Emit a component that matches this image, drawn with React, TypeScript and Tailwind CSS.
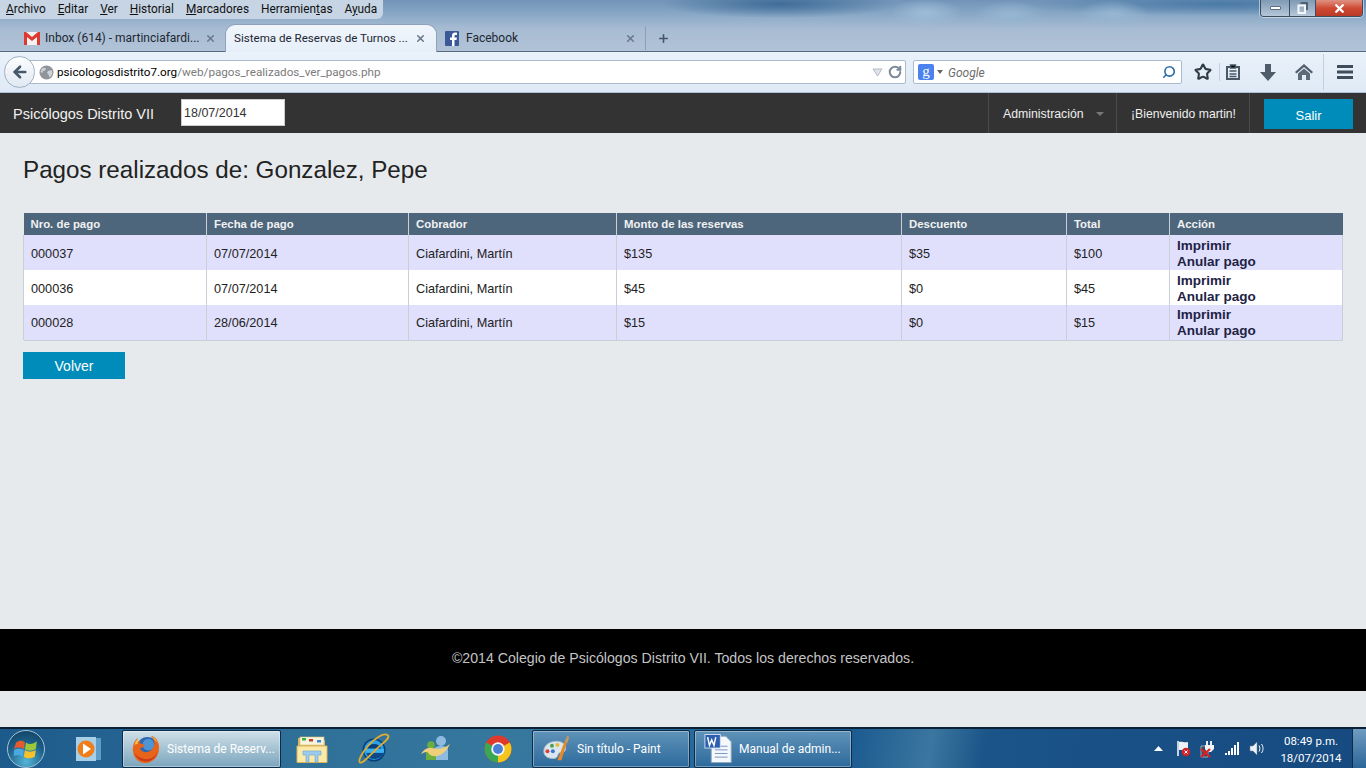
import React from "react";
import { Star, ArrowLeft, X, Plus, RotateCw, Search } from "lucide-react";

const ui = "font-['Roboto','Noto_Sans',sans-serif]";

function Gmail() {
  return (
    <svg width="16" height="13" viewBox="0 0 16 13">
      <rect width="16" height="13" fill="#f6f2f0" />
      <path d="M0 0h2l6 5 6-5h2v13h-3V5L8 9 3 5v8H0z" fill="#dc3a30" />
    </svg>
  );
}

function FbIcon() {
  return (
    <svg width="14" height="15" viewBox="0 0 14 15">
      <rect width="14" height="15" rx="1" fill="#3b5998" />
      <path d="M9.500 15V9h2l.4-2.400H9.500V5.200c0-.8.300-1.200 1.200-1.200H12V1.800C11.600 1.700 10.900 1.600 10.200 1.600 8.300 1.600 7 2.700 7 4.900v1.700H5V9h2v6z" fill="#fff" />
    </svg>
  );
}

function GlobeIcon() {
  return (
    <svg width="15" height="15" viewBox="0 0 15 15">
      <circle cx="7.500" cy="7.500" r="7" fill="#8f959b" />
      <path d="M3 3.500c2-1 3-1 4 0l-1 2-2 .5-.5 2L1.500 7zM9 6l3.500-1 1 2.500-1 3-2 2-1-3-1.500-1.500z" fill="#cfd3d7" />
    </svg>
  );
}

function Firefox() {
  return (
    <svg width="29" height="31" viewBox="0 0 30 32">
      <circle cx="16" cy="15" r="11" fill="#2f68ad" />
      <circle cx="17" cy="12" r="6" fill="#4f95d6" />
      <path d="M20 3c5 1 8 6 8 12 0 9-6 16-14 16C7 31 2 26 1 19 .5 14 2 8 6 5c-1 2-1 4-.5 5 1-1 2-2 3.500-2.500-.8 1-1.300 2-1.300 3 2 .5 4 1 5.500 2-.5 2-3 3-5 3 1 3 4 5 8 4 4-1 7-5 7-9 0-3-1.500-6-3.700-7.500z" fill="#e8641b" />
      <path d="M2.500 21c2 5 6.500 8.500 12 8.500 6 0 11-5 12.500-11-2 5-6.500 8.500-12 8.500-5 0-9.500-2-12.500-6z" fill="#c9391c" />
      <path d="M21 4c3 1.500 5 4 5.800 7-1-1.800-2.500-3.400-4.300-4.500z" fill="#f8c63a" />
      <path d="M3 12c0-2 1-4 3-6-.5 2-.3 3.500 0 5z" fill="#f8c63a" />
    </svg>
  );
}

function Explorer() {
  return (
    <svg width="32" height="30" viewBox="0 0 32 30">
      <path d="M2 4h10l2 2h15v22H2z" fill="#d9b65c" />
      <rect x="4" y="3" width="24" height="8" fill="#f9f5dc" stroke="#d2bf7c" strokeWidth=".6" />
      <rect x="6" y="4" width="4" height="2.500" fill="#3fae49" />
      <rect x="13" y="5" width="4" height="2.500" fill="#c83c30" />
      <rect x="21" y="6" width="4" height="2.500" fill="#3b82d6" />
      <path d="M1 12h30v16.500H1z" fill="#fbe9a8" stroke="#d9b65c" />
      <path d="M7 17h18v4h-3v7h-3v-7h-6v7h-3v-7H7z" fill="#9ccbec" stroke="#6ba6d3" strokeWidth=".6" />
    </svg>
  );
}

function IE() {
  return (
    <svg width="32" height="32" viewBox="0 0 32 32">
      <circle cx="16" cy="17" r="11.500" fill="#0b3f7c" />
      <circle cx="16" cy="17" r="10" fill="#27a0ec" />
      <path d="M9 15.500c.8-3 3.600-4.500 7-4.500s6.200 1.500 7 4.500z" fill="#0b3f7c" />
      <path d="M8 20h17.500c-1.200 3.800-5 6-9.500 6-3.600 0-6.400-2-7.500-6z" fill="#0b3f7c" opacity=".9" />
      <rect x="8" y="16" width="18" height="3.500" fill="#3db2f2" />
      <path d="M30 2.500c2.500 3-5 7-13 15S4 31 2 29.500 3 21 10 13 26-1 30 2.500z" fill="none" stroke="#e0ad2e" strokeWidth="1.800" />
    </svg>
  );
}

function Messenger() {
  return (
    <svg width="32" height="28" viewBox="0 0 32 28">
      <circle cx="21" cy="6" r="5" fill="#8fbbe0" />
      <path d="M14 25V15c0-3 3-4 7-4s7 1 7 4v10z" fill="#8fbbe0" />
      <circle cx="11" cy="10" r="3.800" fill="#6cae3e" />
      <path d="M6 25v-7c0-3 2-4 5-4s5 1 5 4v7z" fill="#6cae3e" />
      <path d="M1 19c3-5 7-7 11-6 5 1 11 2 18-4-4 9-11 13-17 12-3 0-4-3-6-4-2-.500-4 1-6 2z" fill="#efcf7a" />
    </svg>
  );
}

function Chrome() {
  return (
    <svg width="28" height="28" viewBox="0 0 30 30">
      <circle cx="15" cy="15" r="14.500" fill="#e0392b" />
      <path d="M15 15 27.600 8A14.500 14.500 0 0 1 15 29.500z" fill="#f6c51b" />
      <path d="M15 15 15 29.500A14.500 14.500 0 0 1 2.400 8z" fill="#3aa852" />
      <circle cx="15" cy="15" r="7.200" fill="#f4f4f4" />
      <circle cx="15" cy="15" r="5.300" fill="#4a80d6" />
    </svg>
  );
}

function Paint() {
  return (
    <svg width="29" height="29" viewBox="0 0 32 30">
      <path d="M2 18C2 11 9 7 16 7s11 4 10 9c-1 4-5 3-7 4s-1 6-6 6C7 26 2 24 2 18z" fill="#dbe6ee" stroke="#a9bccb" />
      <circle cx="6" cy="18" r="2.200" fill="#d9403a" />
      <circle cx="11" cy="12" r="2.200" fill="#4da04f" />
      <circle cx="17" cy="11" r="2.200" fill="#e8b830" />
      <circle cx="12" cy="18" r="2.200" fill="#3a78c9" />
      <path d="M17 28 25 7l2.500 1-6 20z" fill="#e58a26" />
      <path d="M25 7l3-6 2 1-2 7z" fill="#c49a66" />
    </svg>
  );
}

function Word() {
  return (
    <svg width="29" height="31" viewBox="0 0 32 33">
      <path d="M8 3h16l6 6v23H8z" fill="#f4f7fb" stroke="#8ea6c2" />
      <path d="M12 14h14M12 18h14M12 22h14M12 26h14" stroke="#6f8fbd" />
      <rect x="1" y="1" width="17" height="15" fill="#2d5fb0" stroke="#d6e2f3" />
      <path d="M4 4l2 9 2.500-6 2.500 6 2-9" fill="none" stroke="#fff" strokeWidth="1.600" />
    </svg>
  );
}

function MediaPlayer() {
  return (
    <svg width="26" height="26" viewBox="0 0 26 26">
      <rect x="6" y="2" width="20" height="22" fill="#5f9cc6" />
      <rect x="1" y="1" width="20" height="24" fill="#a8cfe8" />
      <circle cx="11" cy="13" r="8.500" fill="#ee7d1a" />
      <path d="M8 7.500l8 5.500-8 5.500z" fill="#fff" />
    </svg>
  );
}

function StartOrb() {
  return (
    <div className="flex h-[38px] w-[38px] items-center justify-center rounded-full border border-[#a4c4d8] bg-[radial-gradient(circle_at_50%_85%,#54b6d8,#1c5f88_55%,#123a5a)]">
      <svg width="24" height="22" viewBox="0 0 22 20">
        <path d="M2 4c3-2 6-2 8 0l-1 6c-3-2-6-2-9 0z" fill="#e8592c" />
        <path d="M11 4c3 2 6 2 10-1l-1 7c-4 2-7 2-10 0z" fill="#9cc83a" />
        <path d="M0 11c3-2 6-2 9 0l-1 6c-3-2-6-2-9 0z" fill="#4ba8e0" />
        <path d="M10 11c3 2 6 2 10 0l-1 6c-4 2-7 2-10 0z" fill="#f5c22c" />
      </svg>
    </div>
  );
}

function Tray() {
  return (
    <div className="flex items-center">
      <svg width="9" height="5" viewBox="0 0 9 5" className="mr-[14px]">
        <path d="M0 5l4.500-5L9 5z" fill="#fff" />
      </svg>
      <svg width="14" height="17" viewBox="0 0 14 17" className="mr-[8px]">
        <path d="M1 1v15" stroke="#fff" strokeWidth="1.500" />
        <path d="M2 2c3-1 5 1 9 0v8H2z" fill="#eef2f6" />
        <circle cx="9" cy="12" r="4.300" fill="#d4232a" />
        <path d="M7.500 10.500l3 3M10.500 10.500l-3 3" stroke="#fff" />
      </svg>
      <svg width="16" height="18" viewBox="0 0 16 18" className="mr-[10px]">
        <path d="M2 6h7v11H2z" fill="#3a4a58" stroke="#c8d4de" strokeWidth=".7" />
        <path d="M8 1v4M12 1v4" stroke="#fff" strokeWidth="1.800" />
        <path d="M6 5h9v4l-3 3H8L6 9z" fill="#f2f5f8" />
        <path d="M2 9l9 8M11 9l-9 8" stroke="#dc1f26" strokeWidth="2.200" />
      </svg>
      <svg width="14" height="13" viewBox="0 0 14 13" className="mr-[10px]">
        <path d="M0 11h2v2H0zM3 9h2v4H3zM6 6h2v7H6zM9 3h2v10H9zM12 0h2v13h-2z" fill="#fff" />
      </svg>
      <svg width="16" height="15" viewBox="0 0 16 15">
        <path d="M1 5h3l4-4v13l-4-4H1z" fill="#eef2f6" stroke="#6e8397" strokeWidth=".5" />
        <path d="M10 4.500c1.200 2 1.200 4 0 6M12.500 3c2 3 2 6 0 9" stroke="#fff" fill="none" />
      </svg>
    </div>
  );
}

function Task({ width, active, icon, label }: { width: string; active?: boolean; icon: React.ReactNode; label: string }) {
  return (
    <div
      className={`flex h-[38px] items-center gap-[6px] rounded-[2px] border border-[#0d2c4a] pl-[9px] text-[12px] text-white shadow-[inset_0_0_0_1px_rgba(255,255,255,0.35)] ${width} ${
        active ? "bg-gradient-to-b from-[#cfe0e8] to-[#7ba5bd]" : "bg-gradient-to-b from-[#5f93b8] to-[#2c6a9c]"
      }`}
    >
      <div className="flex w-[29px] shrink-0 justify-center">{icon}</div>
      <span className="whitespace-nowrap">{label}</span>
    </div>
  );
}

function Pin({ children }: { children: React.ReactNode }) {
  return <div className="flex w-[62px] shrink-0 justify-center">{children}</div>;
}

const rows = [
  ["000037", "07/07/2014", "Ciafardini, Martín", "$135", "$35", "$100"],
  ["000036", "07/07/2014", "Ciafardini, Martín", "$45", "$0", "$45"],
  ["000028", "28/06/2014", "Ciafardini, Martín", "$15", "$0", "$15"],
];
const heads: [string, string][] = [
  ["Nro. de pago", "w-[183px]"],
  ["Fecha de pago", "w-[202px]"],
  ["Cobrador", "w-[208px]"],
  ["Monto de las reservas", "w-[285px]"],
  ["Descuento", "w-[165px]"],
  ["Total", "w-[103px]"],
  ["Acción", "w-[173px]"],
];

function MenuItem({ k, rest, pre }: { k: string; rest: string; pre?: string }) {
  return (
    <span>
      {pre}
      <span className="underline">{k}</span>
      {rest}
    </span>
  );
}

export default function App() {
  return (
    <div className="flex h-[768px] w-[1366px] flex-col overflow-hidden bg-[#e6eaed] font-['Liberation_Sans',Arial,sans-serif]">
      {/* Window title and tabs */}
      <div
        className={`relative h-[52px] shrink-0 border-b border-[#54687f] bg-[radial-gradient(ellipse_36px_14px_at_926px_13px,#9dbdd8,transparent),radial-gradient(ellipse_36px_14px_at_1010px_15px,#96b6d2,transparent),radial-gradient(ellipse_36px_14px_at_1113px_14px,#96b6d2,transparent),radial-gradient(ellipse_120px_14px_at_780px_4px,#3f6c98,transparent),radial-gradient(ellipse_200px_12px_at_1220px_4px,#4a7aa6,transparent),linear-gradient(180deg,#7294b8_0%,#86a6c5_25%,#a6bbd2_55%,#b2c3d7_100%)] ${ui}`}
      >
        <div className="flex h-[19px] w-[383px] items-center gap-[12px] rounded-br-[6px] bg-[#c6d4e4] pl-[6px] pt-px text-[11.85px] leading-none text-[#111]">
          <MenuItem k="A" rest="rchivo" />
          <MenuItem k="E" rest="ditar" />
          <MenuItem k="V" rest="er" />
          <MenuItem k="H" rest="istorial" />
          <MenuItem k="M" rest="arcadores" />
          <MenuItem pre="Herramien" k="t" rest="as" />
          <MenuItem pre="A" k="y" rest="uda" />
        </div>
        <div className="mt-[5px] flex h-[28px] items-center text-[12px] text-[#1d2733]">
          <div className="flex h-[28px] w-[225px] shrink-0 items-center pl-[24px] pr-[9px]">
            <Gmail />
            <span className="ml-[5px] flex-1 whitespace-nowrap">Inbox (614) - martinciafardi...</span>
            <X size={11} strokeWidth={3.500} className="text-[#6a7a8b]" />
          </div>
          <div className="flex h-[28px] w-[212px] shrink-0 items-center rounded-t-[10px] border border-b-0 border-[#8ea3ba] bg-gradient-to-b from-[#f0f5fb] to-[#e6eff9] pl-[8px] pr-[10px]">
            <span className="flex-1 whitespace-nowrap text-[11.6px]">Sistema de Reservas de Turnos ...</span>
            <X size={11} strokeWidth={3.500} className="text-[#6a7a8b]" />
          </div>
          <div className="flex h-[28px] w-[208px] shrink-0 items-center pl-[8px] pr-[9px]">
            <FbIcon />
            <span className="ml-[7px] flex-1">Facebook</span>
            <X size={11} strokeWidth={3.500} className="text-[#6a7a8b]" />
          </div>
          <div className="flex h-[24px] items-center border-l border-[#8b9fb5] pl-[11px]">
            <Plus size={13} strokeWidth={3} className="text-[#46566a]" />
          </div>
        </div>
        <div className="absolute right-[3px] top-0 flex h-[17px] w-[103px] overflow-hidden rounded-b-[4px] border border-t-0 border-[#3d4c5e] shadow-[0_0_0_1px_rgba(255,255,255,0.5)]">
          <div className="flex w-[28px] items-center justify-center bg-gradient-to-b from-[#7f9ab5] to-[#b6c7d8]">
            <div className="h-[4px] w-[11px] rounded-[1px] border border-[#5c6f82] bg-white" />
          </div>
          <div className="flex w-[27px] items-center justify-center border-x border-[#3d4c5e] bg-gradient-to-b from-[#7f9ab5] to-[#b6c7d8]">
            <svg width="11" height="12" viewBox="0 0 11 12">
              <path d="M3.500 1h6.500v7" fill="none" stroke="#3d4c5e" strokeWidth="1.500" />
              <rect x="1.500" y="3.500" width="6.500" height="7.500" fill="none" stroke="#f4f7fa" strokeWidth="2" />
            </svg>
          </div>
          <div className="flex flex-1 items-center justify-center bg-gradient-to-b from-[#dd9283] via-[#cf4a33] to-[#b83a26]">
            <X size={13} strokeWidth={4.500} className="text-white" />
          </div>
        </div>
      </div>

      {/* Navigation toolbar */}
      <div className={`flex h-[41px] shrink-0 items-center border-b border-[#a9c1d8] bg-gradient-to-b from-[#e9f1fa] to-[#dfeaf6] pl-[4px] ${ui}`}>
        <div className="z-10 flex h-[32px] w-[31px] items-center justify-center rounded-full border border-[#9fb1c4] bg-gradient-to-b from-[#fdfeff] to-[#e0e8f1]">
          <ArrowLeft size={18} strokeWidth={3.500} className="text-[#46586b]" />
        </div>
        <div className="-ml-[6px] flex h-[24px] w-[877px] items-center rounded-r-[2px] border border-[#a9bbcd] bg-white pl-[9px] pr-[3px] text-[11.7px]">
          <GlobeIcon />
          <span className="ml-[3px] flex-1 pt-px text-black">
            psicologosdistrito7.org<span className="text-[#7b7b7b]">/web/pagos_realizados_ver_pagos.php</span>
          </span>
          <svg width="11" height="9" viewBox="0 0 11 9" className="mr-[5px]">
            <path d="M1 1h9L5.500 8z" fill="#dfe3e7" stroke="#b4bcc4" />
          </svg>
          <RotateCw size={14} strokeWidth={3.500} className="text-[#7d8b99]" />
        </div>
        <div className="ml-[7px] flex h-[24px] w-[269px] items-center rounded-[2px] border border-[#a9bbcd] bg-white pl-[4px] pr-[5px]">
          <div className="flex h-[16px] w-[16px] items-center justify-center rounded-[2px] bg-[#4a82ee] pb-[2px] font-['Liberation_Serif',serif] text-[15px] leading-none text-white">g</div>
          <svg width="6" height="4" viewBox="0 0 6 4" className="ml-[3px]">
            <path d="M0 0h6L3 4z" fill="#666" />
          </svg>
          <span className="ml-[5px] flex-1 pt-px text-[12px] italic text-[#6d6d6d]">Google</span>
          <Search size={14} strokeWidth={2.800} className="-scale-x-100 text-[#2e6ea8]" />
        </div>
        <div className="ml-[12px] flex items-center text-[#4a5764]">
          <Star size={18} strokeWidth={2.800} className="text-[#2f3b47]" />
          <div className="ml-[7px] h-[18px] w-px bg-[#c3d0dc]" />
          <svg width="14" height="16" viewBox="0 0 14 16" className="ml-[6px]">
            <path d="M1 3h12v12H1z" fill="none" stroke="#4a5764" strokeWidth="2" />
            <path d="M4.500 1h5v3h-5zM3.500 7h7M3.500 10h7M3.500 12.500h7" stroke="#4a5764" strokeWidth="1.500" />
          </svg>
          <svg width="16" height="17" viewBox="0 0 16 17" className="ml-[20px]">
            <path d="M5 0h6v8h5l-8 9-8-9h5z" fill="#4f5c69" />
          </svg>
          <svg width="18" height="16" viewBox="0 0 18 16" className="ml-[19px]">
            <path d="M9 0l9 8-1.500 1.500L9 3 1.500 9.500 0 8z" fill="#4f5c69" />
            <path d="M3 9.500 9 4.500l6 5V16h-4v-5H7v5H3z" fill="#5d6b78" />
          </svg>
          <div className="ml-[10px] h-[36px] w-px bg-[#c3d0dc]" />
          <svg width="16" height="14" viewBox="0 0 16 14" className="ml-[13px]">
            <path d="M0 0h16v3H0zM0 5.500h16v3H0zM0 11h16v3H0z" fill="#3f4c59" />
          </svg>
        </div>
      </div>

      {/* Site header */}
      <div className="flex h-[40px] shrink-0 items-center bg-[#333] text-white">
        <span className="ml-[13px] w-[168px] pt-[3px] text-[14.5px] text-[#f1f1f1]">Psicólogos Distrito VII</span>
        <div className="-mt-px flex h-[27px] w-[104px] items-center border border-[#ccc] bg-white pl-[2px] pt-[2px] text-[12.5px] text-[#333]">18/07/2014</div>
        <div className="ml-auto flex h-[40px] items-center">
          <div className="flex h-full w-[128px] items-center border-l border-[#4a4a4a] pl-[14px] pt-[2px] text-[12.3px] text-[#eee]">
            Administración
            <span className="ml-[12px] h-0 w-0 border-x-[4px] border-t-[4px] border-x-transparent border-t-[#777]" />
          </div>
          <div className="flex h-full w-[133px] items-center border-l border-[#4a4a4a] pl-[14px] pt-[2px] text-[12.2px] text-[#eee]">¡Bienvenido martin!</div>
          <div className="flex h-full w-[117px] items-center border-l border-[#4a4a4a] pl-[14px] pt-[2px]">
            <div className="flex h-[30px] w-[89px] items-center justify-center bg-[#008cba] pt-[3px] text-[13px] text-white">Salir</div>
          </div>
        </div>
      </div>

      {/* Main */}
      <div className="h-[496px] shrink-0 px-[23px] pt-[23px]">
        <h1 className="text-[24.2px] leading-[28px] text-[#222]">Pagos realizados de: Gonzalez, Pepe</h1>
        <table className="mt-[29px] w-[1319px] table-fixed border-collapse text-[12.7px] text-[#222]">
          <thead>
            <tr className="h-[22px] bg-[#4d667c] text-left text-[11.4px] font-bold text-[#f1f1f1]">
              {heads.map(([h, w]) => (
                <th key={h} className={`border-x border-[#c8cfd8] px-[7px] pb-0 pt-[2px] first:border-l-0 last:border-r-0 ${w}`}>
                  {h}
                </th>
              ))}
            </tr>
          </thead>
          <tbody>
            {rows.map((r, i) => (
              <tr key={r[0]} className={`h-[35px] ${i % 2 === 0 ? "bg-[#e0e0fd]" : "bg-white"}`}>
                {r.map((c, j) => (
                  <td key={j} className={`border border-y-0 border-[#c8cfd8] px-[7px] pb-0 ${i < 2 ? "pt-[4px]" : "pt-[2px]"}`}>
                    {c}
                  </td>
                ))}
                <td className={`border border-y-0 border-[#c8cfd8] px-[7px] pb-0 text-[13.5px] font-bold leading-[16px] text-[#222244] ${i < 2 ? "pt-[2px]" : "pt-0"}`}>
                  <div>Imprimir</div>
                  <div>Anular pago</div>
                </td>
              </tr>
            ))}
            <tr className="h-px">
              <td colSpan={7} className="h-px bg-[#c8cfd8] p-0" />
            </tr>
          </tbody>
        </table>
        <div className="mt-[11px] flex h-[27px] w-[102px] items-center justify-center bg-[#008cba] pt-[2px] text-[14px] text-white">Volver</div>
      </div>

      {/* Footer */}
      <div className="flex h-[62px] shrink-0 items-center justify-center bg-black pb-[2px] text-[14.15px] text-[#c4c4c4]">
        ©2014 Colegio de Psicólogos Distrito VII. Todos los derechos reservados.
      </div>

      <div className="h-[36px] shrink-0 bg-[#e6eaed]" />

      {/* Windows taskbar */}
      <div className={`flex h-[41px] shrink-0 items-center border-t-2 border-[#0b2136] bg-[linear-gradient(100deg,#1d5a8c_0%,#2f7099_22%,#37789f_38%,#2a6a9a_50%,#1b5a90_62%,#3a769f_68%,#1a5488_72%,#164a80_100%)] pl-[7px] ${ui}`}>
        <StartOrb />
        <div className="ml-[30px]"><MediaPlayer /></div>
        <div className="ml-[21px]">
          <Task width="w-[159px]" active icon={<Firefox />} label="Sistema de Reserv..." />
        </div>
        <Pin><Explorer /></Pin>
        <Pin><IE /></Pin>
        <Pin><Messenger /></Pin>
        <Pin><Chrome /></Pin>
        <div className="ml-[3px]">
          <Task width="w-[158px]" icon={<Paint />} label="Sin título - Paint" />
        </div>
        <div className="ml-[4px]">
          <Task width="w-[158px]" icon={<Word />} label="Manual de admin..." />
        </div>
        <div className="ml-[302px]"><Tray /></div>
        <div className="ml-[14px] w-[64px] whitespace-nowrap pt-[2px] text-center text-[11.5px] leading-[17px] text-white">
          <div>08:49 p.m.</div>
          <div>18/07/2014</div>
        </div>
        <div className="ml-auto h-full w-[14px] border-l border-[#0d2c4a] bg-gradient-to-b from-[#6f9bc0] to-[#2a679a]" />
      </div>
    </div>
  );
}
